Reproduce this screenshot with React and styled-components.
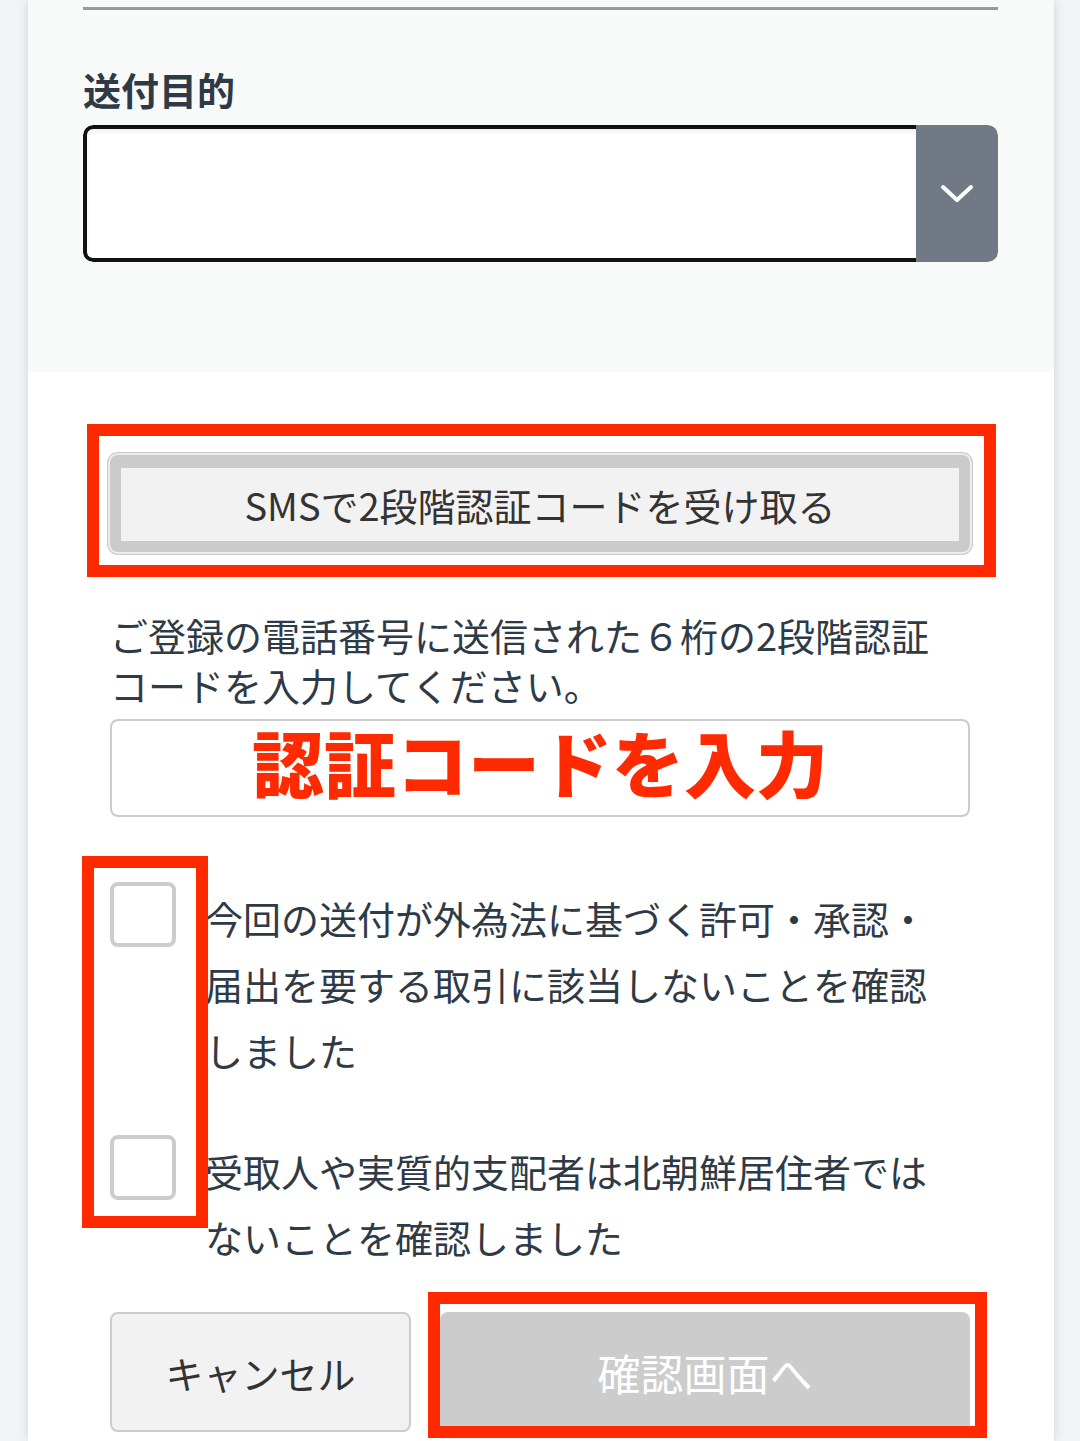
import React from 'react'
import styled, { createGlobalStyle } from 'styled-components'

const red = '#ff2a00'
const ink = '#2e3a46'

const GlobalStyle = createGlobalStyle`
    html, body {
        margin: 0;
        padding: 0;
        background: #f2f3f5;
        font-family: "Noto Sans CJK JP", "Noto Sans", sans-serif;
    }
`

const Card = styled.div`
    width: 1026px;
    margin-left: 28px;
    background: #ffffff;
    box-shadow: 0 0 10px rgba(0, 0, 0, 0.13);
    min-height: 1441px;
`

const TopSection = styled.section`
    background: #f8f9f9;
    padding: 7px 56px 110px 55px;
`

const Rule = styled.div`
    height: 3px;
    background: #999999;
`

const FieldLabel = styled.div`
    margin-top: 52px;
    font-size: 38px;
    line-height: 54px;
    font-weight: 700;
    color: ${ink};
`

const SelectBox = styled.div`
    margin-top: 9px;
    height: 137px;
    display: flex;
    border-radius: 10px;
    overflow: hidden;
`

const SelectField = styled.div`
    flex: 1;
    background: #ffffff;
    border: 4px solid #111111;
    border-right: none;
    border-radius: 10px 0 0 10px;
    box-shadow: inset 0 3px 4px rgba(0, 0, 0, 0.06);
`

const SelectArrow = styled.div`
    width: 82px;
    background: #717a84;
    display: flex;
    align-items: center;
    justify-content: center;
    border-radius: 0 10px 10px 0;
`

const BottomSection = styled.section`
    padding: 83px 84px 0 82px;
`

const Marked = styled.div`
    position: relative;
`

// red annotation frame drawn over the screenshot
const RedFrame = styled.div`
    position: absolute;
    box-sizing: border-box;
    top: ${p => p.$top}px;
    left: ${p => p.$left}px;
    ${p => (p.$width ? `width: ${p.$width}px;` : `right: ${p.$right}px;`)}
    ${p => (p.$height ? `height: ${p.$height}px;` : `bottom: ${p.$bottom}px;`)}
    border: 12px solid ${red};
    pointer-events: none;
`

const SmsButton = styled.button`
    display: block;
    width: 100%;
    height: 97px;
    background: #f2f2f2;
    border: 11px solid #cbcbcb;
    border-top-width: 13px;
    border-radius: 8px;
    box-shadow: 0 0 0 2px #ececec, 0 0 0 3px #c9c9c9;
    font-family: inherit;
    font-size: 38px;
    color: #333333;
    padding: 0;
`

const Hint = styled.p`
    margin: 58px 0 0 0;
    padding-right: 24px;
    font-size: 38px;
    line-height: 50px;
    color: ${ink};
`

const CodeInput = styled.div`
    margin-top: 9px;
    height: 98px;
    box-sizing: border-box;
    border: 2px solid #cccccc;
    border-radius: 8px;
    padding-bottom: 14px;
    display: flex;
    align-items: center;
    justify-content: center;
    font-size: 72px;
    line-height: 1;
    font-weight: 900;
    color: ${red};
`

const ConsentList = styled.div`
    position: relative;
    margin-top: 65px;
    display: flex;
    flex-direction: column;
    gap: 52px;
`

const ConsentRow = styled.label`
    display: flex;
    align-items: flex-start;
    gap: 29px;
`

const Box = styled.span`
    flex: none;
    width: 66px;
    height: 65px;
    box-sizing: border-box;
    border: 4px solid #cccccc;
    border-radius: 8px;
    background: #ffffff;
`

const ConsentText = styled.span`
    margin-top: 3px;
    width: 742px;
    font-size: 38px;
    line-height: 66px;
    color: ${ink};
`

const Actions = styled.div`
    margin-top: 42px;
    display: grid;
    grid-template-columns: 301px 1fr;
    gap: 29px;
`

const ActionButton = styled.button`
    width: 100%;
    height: 120px;
    border-radius: 8px;
    font-family: inherit;
    font-size: ${p => (p.$primary ? 43 : 38)}px;
    padding: 0;
    border: 2px solid #cccccc;
    background: ${p => (p.$primary ? '#cccccc' : '#f2f2f2')};
    color: ${p => (p.$primary ? '#ffffff' : '#333333')};
`

const Chevron = () => (
    <svg width="34" height="20" viewBox="0 0 34 20">
        <polyline points="3,3 17,16 31,3" fill="none" stroke="#ffffff" strokeWidth="4" strokeLinecap="round" strokeLinejoin="round" />
    </svg>
)

export default function App() {
    return (
        <>
            <GlobalStyle />
            <Card>
                <TopSection>
                    <Rule />
                    <FieldLabel>送付目的</FieldLabel>
                    <SelectBox>
                        <SelectField />
                        <SelectArrow><Chevron /></SelectArrow>
                    </SelectBox>
                </TopSection>

                <BottomSection>
                    <Marked>
                        <SmsButton>SMSで2段階認証コードを受け取る</SmsButton>
                        <RedFrame $top={-31} $left={-23} $right={-26} $bottom={-25} />
                    </Marked>

                    <Hint>ご登録の電話番号に送信された６桁の2段階認証コードを入力してください。</Hint>
                    <CodeInput>認証コードを入力</CodeInput>

                    <ConsentList>
                        <ConsentRow>
                            <Box />
                            <ConsentText>今回の送付が外為法に基づく許可・承認・届出を要する取引に該当しないことを確認しました</ConsentText>
                        </ConsentRow>
                        <ConsentRow>
                            <Box />
                            <ConsentText>受取人や実質的支配者は北朝鮮居住者ではないことを確認しました</ConsentText>
                        </ConsentRow>
                        <RedFrame $top={-26} $left={-28} $width={126} $height={372} />
                    </ConsentList>

                    <Actions>
                        <ActionButton>キャンセル</ActionButton>
                        <Marked>
                            <ActionButton $primary>確認画面へ</ActionButton>
                            <RedFrame $top={-20} $left={-12} $right={-17} $bottom={-6} />
                        </Marked>
                    </Actions>
                </BottomSection>
            </Card>
        </>
    )
}
